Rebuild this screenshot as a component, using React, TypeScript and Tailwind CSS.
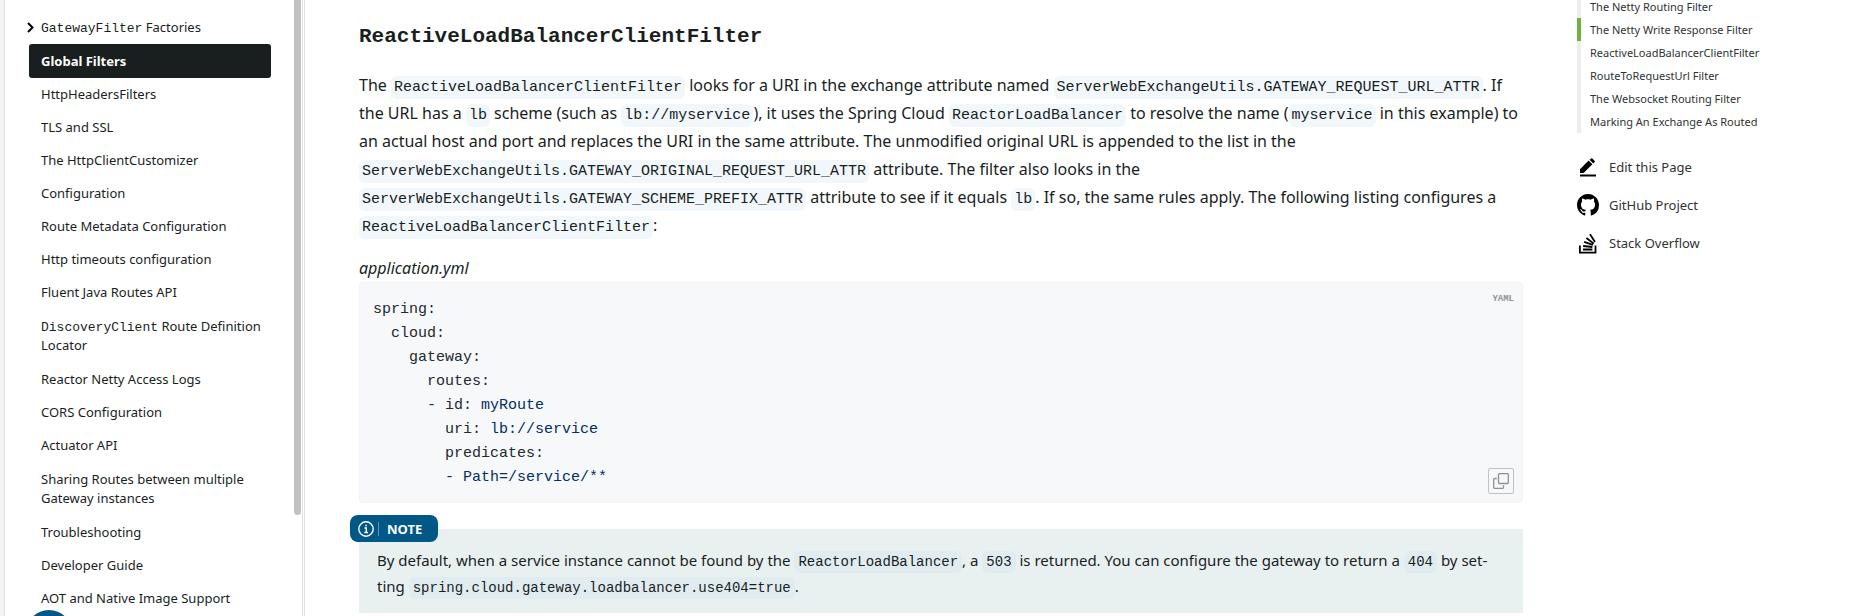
import React from 'react';

interface NavItem {
  label: React.ReactNode;
  active?: boolean;
  expandable?: boolean;
  multiline?: boolean;
}

const navItems: NavItem[] = [
  { label: <><NavCode>GatewayFilter</NavCode> Factories</>, expandable: true },
  { label: 'Global Filters', active: true },
  { label: 'HttpHeadersFilters' },
  { label: 'TLS and SSL' },
  { label: 'The HttpClientCustomizer' },
  { label: 'Configuration' },
  { label: 'Route Metadata Configuration' },
  { label: 'Http timeouts configuration' },
  { label: 'Fluent Java Routes API' },
  { label: <><NavCode>DiscoveryClient</NavCode> Route Definition Locator</>, multiline: true },
  { label: 'Reactor Netty Access Logs' },
  { label: 'CORS Configuration' },
  { label: 'Actuator API' },
  { label: 'Sharing Routes between multiple Gateway instances', multiline: true },
  { label: 'Troubleshooting' },
  { label: 'Developer Guide' },
  { label: 'AOT and Native Image Support' },
];

const tocItems = [
  { label: 'The Netty Routing Filter' },
  { label: 'The Netty Write Response Filter', active: true },
  { label: 'ReactiveLoadBalancerClientFilter' },
  { label: 'RouteToRequestUrl Filter' },
  { label: 'The Websocket Routing Filter' },
  { label: 'Marking An Exchange As Routed' },
];

const yamlLines: [string, string?][] = [
  ['spring:'],
  ['  cloud:'],
  ['    gateway:'],
  ['      routes:'],
  ['      - id: ', 'myRoute'],
  ['        uri: ', 'lb://service'],
  ['        predicates:'],
  ['        - ', 'Path=/service/**'],
];

function NavCode({ children }: { children: React.ReactNode }) {
  return <code className="font-['Liberation_Mono',monospace] text-[13px] leading-none">{children}</code>;
}

function Code({ children }: { children: React.ReactNode }) {
  return (
    <code className="rounded-md bg-[#f1f7fb] px-[3px] py-[3px] font-['Liberation_Mono',monospace] text-[15px] leading-none">
      {children}
    </code>
  );
}

function NoteCode({ children }: { children: React.ReactNode }) {
  return (
    <code className="rounded-md bg-[#e1ecf1] px-1 py-[3px] font-['Liberation_Mono',monospace] text-sm leading-none">
      {children}
    </code>
  );
}

function navLinkClass(item: NavItem) {
  if (item.active) {
    return 'block rounded-[3px] bg-[#191e1e] px-3 py-[7px] leading-5 font-bold text-white';
  }
  return item.multiline ? 'block py-2 pr-1 pl-3' : 'block py-[7px] pr-1 pl-3';
}

const Sidebar = () => (
  <aside className="flex w-[305px] shrink-0 border-l-4 border-[#f5f5f5]">
    <nav className="min-w-0 flex-1 border-l border-[#e1e1e1] pt-[11px] pr-[23px] pl-6">
      <ul className="text-[13px] leading-[19px]">
        {navItems.map((item, i) => (
          <li key={i} className="relative">
            {item.expandable && (
              <button type="button" aria-label="Expand" className="absolute top-[11px] -left-1">
                <svg width="10" height="11" viewBox="0 0 10 11" fill="none" stroke="#000" strokeWidth="2">
                  <path d="M3 1l4.5 4.5L3 10" />
                </svg>
              </button>
            )}
            <a href="#" className={navLinkClass(item)}>
              {item.label}
            </a>
          </li>
        ))}
      </ul>
    </nav>
    <div className="flex w-[11px] border-r border-[#e1e1e1]">
      <div className="h-[515px] w-[7px] rounded-b bg-[#c1c1c1]" />
      <div className="ml-px w-px bg-[#e1e1e1]" />
    </div>
  </aside>
);

const Article = () => (
  <main className="min-w-0 flex-1 pr-[54px] pl-[54px]">
    <h3 className="mt-[23px] font-['Liberation_Mono',monospace] text-[21px] leading-7 font-bold">
      ReactiveLoadBalancerClientFilter
    </h3>
    <p className="mt-5 text-base leading-7">
      The <Code>ReactiveLoadBalancerClientFilter</Code> looks for a URI in the exchange attribute named{' '}
      <Code>ServerWebExchangeUtils.GATEWAY_REQUEST_URL_ATTR</Code>. If the URL has a <Code>lb</Code> scheme
      (such as <Code>lb://myservice</Code>), it uses the Spring Cloud <Code>ReactorLoadBalancer</Code> to
      resolve the name (<Code>myservice</Code> in this example) to an actual host and port and replaces the
      URI in the same attribute. The unmodified original URL is appended to the list in the{' '}
      <Code>ServerWebExchangeUtils.GATEWAY_ORIGINAL_REQUEST_URL_ATTR</Code> attribute. The filter also looks
      in the <Code>ServerWebExchangeUtils.GATEWAY_SCHEME_PREFIX_ATTR</Code> attribute to see if it equals{' '}
      <Code>lb</Code>. If so, the same rules apply. The following listing configures a{' '}
      <Code>ReactiveLoadBalancerClientFilter</Code>:
    </p>

    <figure className="mt-4">
      <figcaption className="text-base leading-[27px] italic">application.yml</figcaption>
      <div className="relative rounded-[4px] border border-[#f1f3f5] bg-[#f6f8fa]">
        <pre className="px-[13px] pt-[15px] pb-3 font-['Liberation_Mono',monospace] text-[15px] leading-6 text-[#24292e]">
          {yamlLines.map(([key, value], i) => (
            <div key={i}>
              {key}
              {value && <span className="text-[#032f62]">{value}</span>}
            </div>
          ))}
        </pre>
        <span className="absolute top-2.5 right-2 font-['Liberation_Mono',monospace] text-[9px] leading-3 font-bold text-[#8e9294]">
          YAML
        </span>
        <button
          type="button"
          aria-label="Copy"
          className="absolute right-2 bottom-2 flex size-[26px] items-center justify-center rounded-[2px] border border-[#c0c2c4]"
        >
          <svg width="16" height="16" viewBox="0 0 16 16" fill="none" stroke="#8f9193" strokeWidth="1.3">
            <rect x="5.5" y="0.7" width="9.8" height="9.8" rx="0.8" />
            <path d="M3.8 5.5H1.5a.8.8 0 0 0-.8.8v8.2a.8.8 0 0 0 .8.8h8.2a.8.8 0 0 0 .8-.8v-2.3" />
          </svg>
        </button>
      </div>
    </figure>

    <section className="relative mt-[26px] bg-[#e9f1f0] px-[18px] pt-[18px] pb-3.5">
      <div className="absolute -top-[14px] -left-[9px] flex h-[27px] w-[88px] items-center rounded-lg bg-[#015785] pl-2 text-white">
        <svg width="16" height="16" viewBox="0 0 16 16" fill="none" stroke="#fff" strokeWidth="1.4">
          <circle cx="8" cy="8" r="7.2" />
          <path d="M6.5 7H8.3V11.5M6.3 11.5H10" />
          <path d="M7.2 4.5h1.6" strokeWidth="1.6" />
        </svg>
        <span className="mr-2 ml-1 h-3.5 w-px bg-[#5d95b3]" />
        <span className="text-[13px] leading-5 font-bold">NOTE</span>
      </div>
      <p className="text-[15px] leading-[26px]">
        By default, when a service instance cannot be found by the <NoteCode>ReactorLoadBalancer</NoteCode>, a{' '}
        <NoteCode>503</NoteCode> is returned. You can configure the gateway to return a{' '}
        <NoteCode>404</NoteCode> by set&shy;ting{' '}
        <NoteCode>spring.cloud.gateway.loadbalancer.use404=true</NoteCode>.
      </p>
    </section>
  </main>
);

const Toc = () => (
  <aside className="w-[278px] shrink-0 overflow-hidden">
    <ul className="-mt-[5px] text-[11px] leading-[23px] text-[#303333]">
      {tocItems.map((item) => (
        <li key={item.label}>
          <a
            href="#"
            className={
              item.active
                ? 'block border-l-4 border-[#6db33f] pl-[9px]'
                : 'block border-l-4 border-[#ebeef0] pl-[9px]'
            }
          >
            {item.label}
          </a>
        </li>
      ))}
    </ul>
    <ul className="mt-[15px] text-[13px] leading-[38px] text-[#303333]">
      <li>
        <a href="#" className="flex items-center gap-2.5">
          <svg width="22" height="22" viewBox="0 0 22 22" fill="#000">
            <path d="M3 13.2V17h3.6l8.8-8.7-3.8-3.7zM12.6 3.7l3.7 3.7 1.4-1.3c.3-.3.3-.8 0-1.1L15.3 2.4c-.3-.3-.8-.3-1.1 0z" />
            <path d="M3 18.5h16v2H3z" />
          </svg>
          Edit this Page
        </a>
      </li>
      <li>
        <a href="#" className="flex items-center gap-2.5">
          <svg width="22" height="22" viewBox="0 0 16 16" fill="#000">
            <path d="M8 0C3.58 0 0 3.58 0 8c0 3.54 2.29 6.53 5.47 7.59.4.07.55-.17.55-.38 0-.19-.01-.82-.01-1.49-2.01.37-2.53-.49-2.69-.94-.09-.23-.48-.94-.82-1.13-.28-.15-.68-.52-.01-.53.63-.01 1.08.58 1.23.82.72 1.21 1.87.87 2.33.66.07-.52.28-.87.51-1.07-1.78-.2-3.64-.89-3.64-3.95 0-.87.31-1.59.82-2.15-.08-.2-.36-1.02.08-2.12 0 0 .67-.21 2.2.82.64-.18 1.32-.27 2-.27s1.36.09 2 .27c1.53-1.04 2.2-.82 2.2-.82.44 1.1.16 1.92.08 2.12.51.56.82 1.27.82 2.15 0 3.07-1.87 3.75-3.65 3.95.29.25.54.73.54 1.48 0 1.07-.01 1.93-.01 2.2 0 .21.15.46.55.38A8.01 8.01 0 0 0 16 8c0-4.42-3.58-8-8-8z" />
          </svg>
          GitHub Project
        </a>
      </li>
      <li>
        <a href="#" className="flex items-center gap-2.5">
          <svg width="22" height="22" viewBox="0 0 22 22" fill="none" stroke="#000" strokeWidth="1.8">
            <path d="M2.9 13.5V20.6H18.5V13.5" />
            <path d="M6 17.5h9.4M6.1 14l9.3 1M7.1 9.9l8.8 3M9.4 6l7.4 5.6M13 2.3l5 7.8" />
          </svg>
          Stack Overflow
        </a>
      </li>
    </ul>
  </aside>
);

const App: React.FC = () => {
  return (
    <div className="relative flex h-screen items-stretch overflow-hidden bg-white font-['Noto_Sans',sans-serif] text-[#191e1e]">
      <Sidebar />
      <Article />
      <Toc />
      <button
        type="button"
        aria-label="Open panel"
        className="absolute -bottom-10 left-[26px] size-[46px] rounded-full bg-[#015785] shadow-md"
      />
    </div>
  );
};

export default App;
